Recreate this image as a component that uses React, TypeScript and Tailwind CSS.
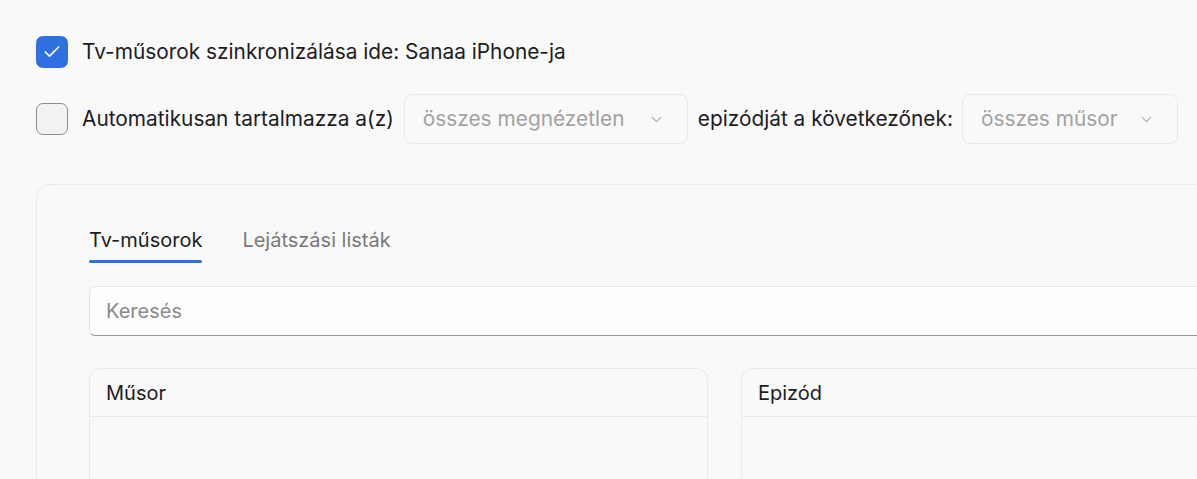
import { Check, ChevronDown } from "lucide-react";

const font = { fontFamily: "Inter, 'Noto Sans', sans-serif" };

function Select({ label, width }: { label: string; width: string }) {
  return (
    <div
      className={`flex h-[50px] items-center justify-between rounded-lg border border-[#e8e8e8] bg-[#f9f9f9] pl-[18px] pr-[22px] ${width}`}
    >
      <span className="text-[20.85px] text-[#a3a3a3]">{label}</span>
      <ChevronDown className="size-[17px] text-[#a8a8a8]" strokeWidth={1.5} />
    </div>
  );
}

function ListBox({ title, width }: { title: string; width: string }) {
  return (
    <div className={`flex shrink-0 flex-col rounded-t-xl border border-b-0 border-[#e9e9e9] ${width}`}>
      <div className="flex h-[48px] items-center border-b border-[#e9e9e9] px-4 text-[20px] text-[#1d1d1f]">
        {title}
      </div>
      <div className="h-[80px]" />
    </div>
  );
}

export default function App() {
  return (
    <div
      className="h-[479px] w-[1197px] overflow-hidden bg-[#f9f9f9] text-[#1d1d1f] antialiased"
      style={font}
    >
      <div className="flex flex-col pl-9 pt-9">
        <label className="flex items-center gap-[14px]">
          <span className="flex size-[32px] items-center justify-center rounded-[7px] bg-[#2f6fdf]">
            <Check className="size-[20px] text-white" strokeWidth={2} />
          </span>
          <span className="text-[20.85px]">Tv-műsorok szinkronizálása ide: Sanaa iPhone-ja</span>
        </label>

        <div className="mt-[26px] flex items-center">
          <span className="size-[32px] rounded-[7px] border-[1.5px] border-[#8c8c8c] bg-[#f2f2f2]" />
          <span className="ml-[14px] text-[20.85px]">Automatikusan tartalmazza a(z)</span>
          <div className="ml-[10px]">
            <Select label="összes megnézetlen" width="w-[284px]" />
          </div>
          <span className="ml-[10px] text-[20.85px]">epizódját a következőnek:</span>
          <div className="ml-[9px]">
            <Select label="összes műsor" width="w-[216px]" />
          </div>
        </div>

        <div className="mt-[40px] w-[1300px] shrink-0 rounded-t-[14px] border border-b-0 border-[#ebebeb] pl-[52px] pt-[40px]">
          <div className="flex gap-[40px] text-[20px]">
            <div className="flex flex-col">
              <span className="text-[#1d1d1f]">Tv-műsorok</span>
              <span className="mt-[5px] h-[3px] w-[113px] rounded-full bg-[#2f6fdf]" />
            </div>
            <span className="text-[#7a7a7a]">Lejátszási listák</span>
          </div>

          <div className="mt-[23px] flex h-[50px] w-[1200px] items-center rounded-md border border-[#e6e6e6] border-b-[#9a9a9a] bg-[#fdfdfd] px-4 text-[20px] text-[#8a8a8a]">
            Keresés
          </div>

          <div className="mt-[32px] flex gap-[33px]">
            <ListBox title="Műsor" width="w-[619px]" />
            <ListBox title="Epizód" width="w-[600px]" />
          </div>
        </div>
      </div>
    </div>
  );
}
